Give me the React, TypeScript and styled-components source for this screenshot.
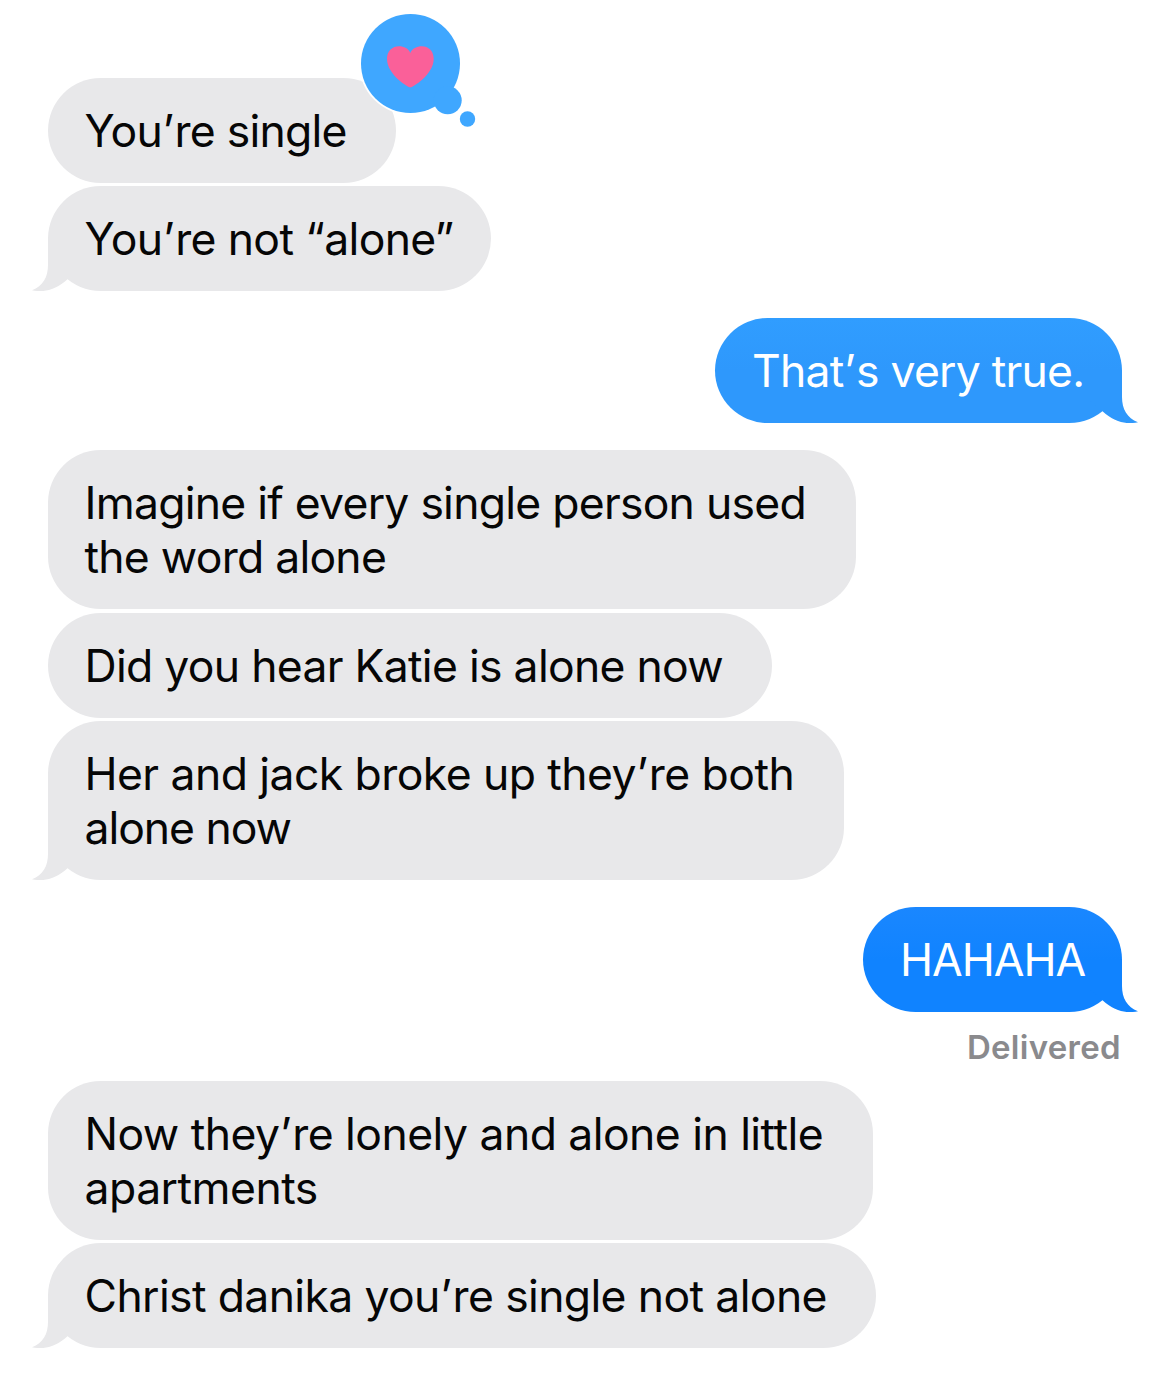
import React from "react";
import styled, { createGlobalStyle } from "styled-components";

const GlobalStyle = createGlobalStyle`
  body {
    margin: 0;
    background: #ffffff;
    font-family: Inter, "Liberation Sans", sans-serif;
  }
`;

type Side = "in" | "out";

const Thread = styled.main`
  box-sizing: border-box;
  width: 1170px;
  height: 1375px;
  padding: 78px 48px 0;
  overflow: hidden;
  display: flex;
  flex-direction: column;
`;

const Group = styled.section<{ $side: Side; $before?: number; $gap?: number }>`
  display: flex;
  flex-direction: column;
  align-items: ${(p) => (p.$side === "in" ? "flex-start" : "flex-end")};
  row-gap: ${(p) => p.$gap ?? 3}px;
  margin-top: ${(p) => p.$before ?? 0}px;
`;

const BubbleBox = styled.div<{ $side: Side; $width: number; $fill: string }>`
  position: relative;
  box-sizing: border-box;
  width: ${(p) => p.$width}px;
  padding: 26px 0 25px ${(p) => (p.$side === "in" ? 36.5 : 37)}px;
  border-radius: 52.5px;
  background: ${(p) => p.$fill};
  color: ${(p) => (p.$side === "in" ? "#060606" : "#ffffff")};
`;

const Line = styled.div<{ $tracking: number }>`
  font-size: 44.5px;
  line-height: 54px;
  letter-spacing: ${(p) => p.$tracking}px;
  white-space: nowrap;
`;

const Apostrophe = styled.span`
  margin: 0 1.3px 0 0.5px;
`;

const TailSvg = styled.svg<{ $side: Side }>`
  position: absolute;
  bottom: 0;
  ${(p) => (p.$side === "in" ? "left: -16px;" : "right: -16px; transform: scaleX(-1);")}
`;

const Reaction = styled.svg`
  position: absolute;
  left: 308px;
  top: -70px;
`;

const Status = styled.div`
  margin-top: 12px;
  margin-right: 1px;
  font-size: 33px;
  line-height: 40px;
  font-weight: 600;
  letter-spacing: 0.3px;
  color: #8a8a8d;
`;

const INCOMING = "#e8e8ea";

function Tail({ side, color }: { side: Side; color: string }) {
  return (
    <TailSvg $side={side} width="52" height="56" viewBox="0 0 52 56">
      <path fill={color} d="M16 3V30C16 42 11 51 0 55.200C9 57.200 22 57 35.500 44.300L52 30V3Z" />
    </TailSvg>
  );
}

function HeartReaction() {
  return (
    <Reaction width="124" height="124" viewBox="0 0 124 124">
      <circle cx="54.500" cy="55.500" r="51.300" fill="#fff" />
      <g fill="#3fa7ff">
        <circle cx="54.500" cy="55.500" r="49.500" />
        <circle cx="91.700" cy="92.300" r="14" />
        <circle cx="111.500" cy="111" r="7.700" />
      </g>
      <path
        fill="#fa6099"
        d="M54.300 79.500C52.500 79.500 31 67 31 50.800C31 43 36.500 38.300 43 38.300C48 38.300 52.500 40.500 54.300 45C56.200 40.500 61 38.300 65.800 38.300C72.300 38.300 77.700 43 77.700 50.800C77.700 67 56.200 79.500 54.300 79.500Z"
      />
    </Reaction>
  );
}

interface BubbleProps {
  side?: Side;
  width: number;
  fill?: string;
  tail?: string;
  lines: [string, number][];
  children?: React.ReactNode;
}

function Bubble({ side = "in", width, fill = INCOMING, tail, lines, children }: BubbleProps) {
  return (
    <BubbleBox $side={side} $width={width} $fill={fill}>
      {tail && <Tail side={side} color={tail} />}
      {lines.map(([text, tracking]) => (
        <Line key={text} $tracking={tracking}>
          {text.split("’").map((part, i) => (
            <React.Fragment key={i}>
              {i > 0 && <Apostrophe>’</Apostrophe>}
              {part}
            </React.Fragment>
          ))}
        </Line>
      ))}
      {children}
    </BubbleBox>
  );
}

export default function App() {
  return (
    <>
      <GlobalStyle />
      <Thread>
        <Group $side="in">
          <Bubble width={348} lines={[["You’re single", -0.78]]}>
            <HeartReaction />
          </Bubble>
          <Bubble width={443} tail={INCOMING} lines={[["You’re not “alone”", -0.64]]} />
        </Group>
        <Group $side="out" $before={27}>
          <Bubble
            side="out"
            width={407}
            fill="linear-gradient(#309dff, #2e98fc 50%)"
            tail="#2e98fc"
            lines={[["That’s very true.", -0.78]]}
          />
        </Group>
        <Group $side="in" $before={27} $gap={3.5}>
          <Bubble
            width={808}
            lines={[
              ["Imagine if every single person used", -0.75],
              ["the word alone", -0.75],
            ]}
          />
          <Bubble width={724} lines={[["Did you hear Katie is alone now", -0.71]]} />
          <Bubble
            width={796}
            tail={INCOMING}
            lines={[
              ["Her and jack broke up they’re both", -0.57],
              ["alone now", -1.05],
            ]}
          />
        </Group>
        <Group $side="out" $before={27}>
          <Bubble
            side="out"
            width={259}
            fill="linear-gradient(#1a87ff, #1083ff 50%)"
            tail="#1083ff"
            lines={[["HAHAHA", -1]]}
          />
          <Status>Delivered</Status>
        </Group>
        <Group $side="in" $before={14}>
          <Bubble
            width={825}
            lines={[
              ["Now they’re lonely and alone in little", -0.55],
              ["apartments", -0.52],
            ]}
          />
          <Bubble
            width={828}
            tail={INCOMING}
            lines={[["Christ danika you’re single not alone", -0.63]]}
          />
        </Group>
      </Thread>
    </>
  );
}
